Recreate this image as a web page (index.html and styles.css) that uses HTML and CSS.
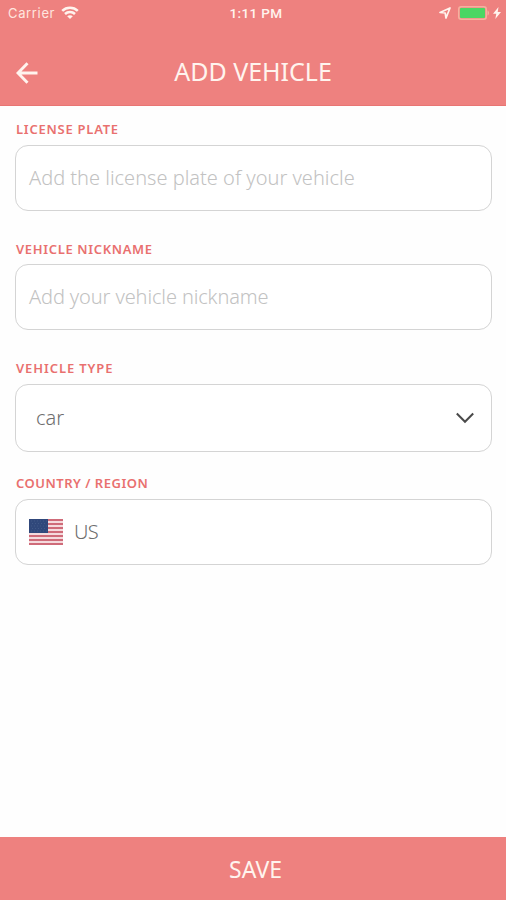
FILE: index.html
```html
<!DOCTYPE html>
<html lang="en">
<head>
<meta charset="utf-8">
<title>Add vehicle</title>
<link rel="stylesheet" href="styles.css">
</head>
<body>
<header class="header">
  <div class="status">
    <div class="status-left">
      <span>Carrier</span>
      <svg class="wifi" viewBox="0 0 18 14" width="18" height="14" fill="none" stroke="currentColor" stroke-width="2.5"><path d="M1.2 4.8C5.6.6 12.4.6 16.8 4.8M4 8c2.800-2.700 7.200-2.700 10 0"/><path d="M6.200 10.200c1.600-1.400 4-1.400 5.600 0L9 13z" fill="currentColor" stroke="none"/></svg>
    </div>
    <span class="clock">1:11 PM</span>
    <div class="status-right">
      <svg viewBox="0 0 12 12" width="12" height="12" fill="none" stroke="currentColor" stroke-width="1.700" stroke-linejoin="round"><path d="M1 5.500 11 1 7 11 6.200 6z"/></svg>
      <svg class="battery" viewBox="0 0 32 14" width="32" height="14"><rect x=".75" y=".75" width="27.500" height="12.500" rx="2.500" fill="none" stroke="#f4b29f" stroke-width="1.500"/><rect x="2" y="2" width="25" height="10" rx="1" fill="#4bd663"/><path d="M29.500 4.500c2 .5 2 4.500 0 5z" fill="#f4b29f"/></svg>
      <svg viewBox="0 0 8 12" width="8" height="12" fill="currentColor"><path d="M5.500 0 0 6.800h3.300L2.300 12 8 5H4.700z"/></svg>
    </div>
  </div>
  <div class="titlebar">
    <svg class="back" viewBox="0 0 22 22" width="22" height="22" fill="none" stroke="currentColor" stroke-width="2.900"><path d="M21.500 11H2.500M11.500 1.200 2 11l9.500 9.800"/></svg>
    <h1 class="title">ADD VEHICLE</h1>
  </div>
</header>
<main class="form">
  <section class="field">
    <h2 class="label license">LICENSE PLATE</h2>
    <div class="box"><span class="hint">Add the license plate of your vehicle</span></div>
  </section>
  <section class="field">
    <h2 class="label nickname">VEHICLE NICKNAME</h2>
    <div class="box"><span class="hint hint-nick">Add your vehicle nickname</span></div>
  </section>
  <section class="field field-type">
    <h2 class="label type">VEHICLE TYPE</h2>
    <div class="box select"><span class="value">car</span>
      <svg viewBox="0 0 18 12" width="18" height="12" fill="none" stroke="#4a4a4a" stroke-width="2"><path d="m.8 1.500 8.200 8.300 8.200-8.300"/></svg>
    </div>
  </section>
  <section class="field">
    <h2 class="label country">COUNTRY / REGION</h2>
    <div class="box">
      <svg viewBox="0 0 34 26" width="34" height="26"><path fill="#f5dadd" d="M0 0h34v26H0z"/><path stroke="#cf6b79" stroke-width="1.800" d="M0 1h34M0 5h34M0 9h34M0 13h34M0 17h34M0 21h34M0 25h34"/><path fill="#30487b" d="M0 0h19v14H0z"/><path stroke="#465e8b" stroke-width=".8" stroke-dasharray="1 2" d="M2 2h16M3 4.500h15M2 7h16M3 9.500h15M2 12h16"/></svg>
      <span class="value us">US</span>
    </div>
  </section>
</main>
<footer class="save">SAVE</footer>
</body>
</html>
```
FILE: styles.css
```css
* { box-sizing: border-box; }
body {
  margin: 0;
  height: 900px;
  display: flex;
  flex-direction: column;
  background: #fefefe;
  font-family: "Noto Sans", "Open Sans", sans-serif;
  overflow: hidden;
}
svg { display: block; flex: none; }
.header { height: 106px; background: #ee817f; color: #fff4ee; border-bottom: 1px solid #e87573; }
.status {
  height: 26px;
  display: grid;
  grid-template-columns: 1fr auto 1fr;
  align-items: center;
  padding: 0 5px 0 8px;
  font: 13px Inter, sans-serif;
}
.status-left { display: flex; align-items: center; gap: 6px; letter-spacing: .65px; color: #ffe6df; }
.wifi { color: #fff4ee; }
.clock { font: 500 13.5px Roboto, sans-serif; letter-spacing: .4px; padding-left: 3px; }
.status-right { display: flex; align-items: center; justify-content: flex-end; gap: 6px; }
.status-right svg:last-child { margin-left: -3px; }
.battery { margin-left: 1px; }
.titlebar {
  height: 79px;
  display: grid;
  grid-template-columns: 22px 1fr 22px;
  align-items: center;
  padding: 14px 16px 0;
}
.title { margin: -4px 0 0; text-align: center; font-size: 25px; line-height: 32px; font-weight: 400; }
.form { flex: 1; padding: 13px 14px 0 15px; }
.field { height: 119.5px; }
.label { margin: 0 0 0 1px; height: 26px; font-size: 13px; line-height: 20px; font-weight: 600; color: #e9706f; white-space: nowrap; }
.license { letter-spacing: .75px; }
.nickname { letter-spacing: .65px; }
.type { letter-spacing: .9px; }
.country { letter-spacing: .5px; }
.box {
  height: 66px;
  border: 1.5px solid #d4d4d4;
  border-radius: 13px;
  background: #fff;
  display: flex;
  align-items: center;
  padding: 0 17px 0 13px;
}
.hint, .value { font-size: 20px; font-weight: 300; line-height: 28px; white-space: nowrap; }
.hint { color: #c2c2c2; }
.hint-nick { letter-spacing: -.12px; }
.value { color: #6e6e6e; }
.field:nth-child(2) { height: 119px; }
.field:nth-child(2) .label { height: 25px; }
.field-type { height: 115px; }
.field-type .box { height: 68px; }
.select { justify-content: space-between; padding-left: 20px; }
.us { margin-left: 11px; letter-spacing: -.6px; }
.save { height: 63px; background: #ee817f; color: #fff4ee; display: flex; align-items: center; justify-content: center; font-size: 23px; padding: 1px 0 0 5px; }
```
